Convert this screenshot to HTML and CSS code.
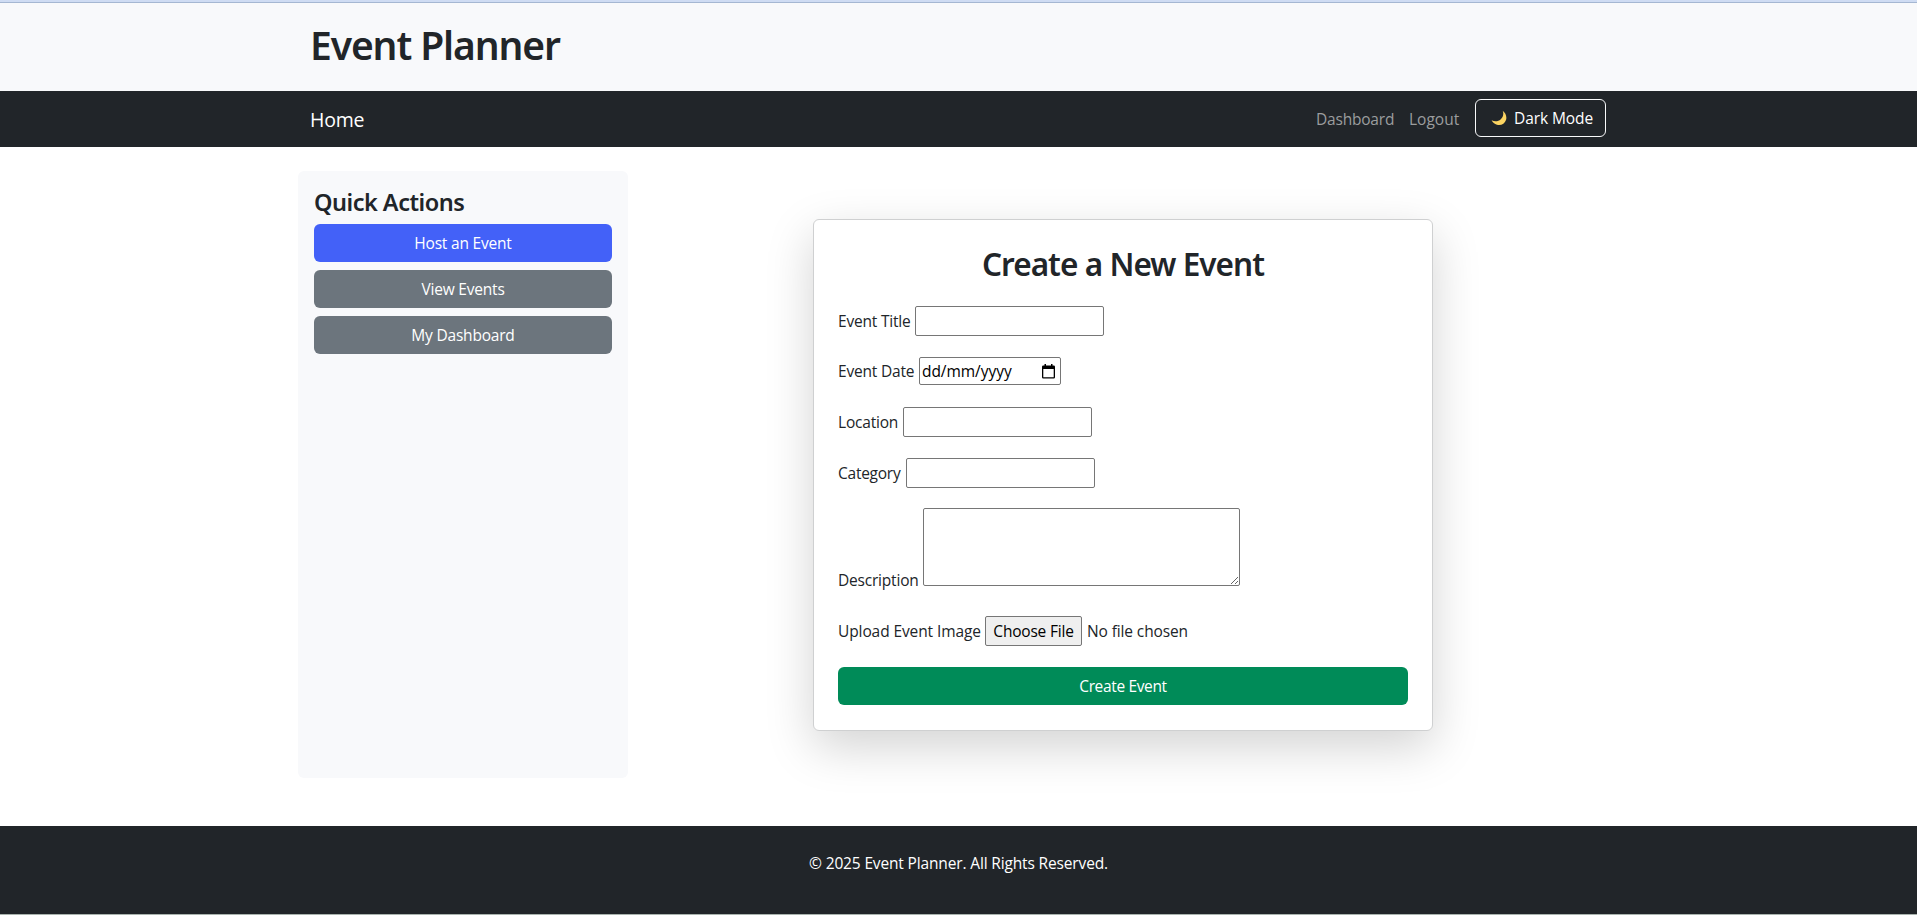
FILE: index.html
```
<!DOCTYPE html>
<html lang="en">
<head>
<meta charset="utf-8">
<title>Event Planner</title>
<link rel="stylesheet" href="styles.css">
</head>
<body>
<header class="header">
  <div class="container"><h1 class="brand-title">Event Planner</h1></div>
</header>
<nav class="navbar">
  <div class="container navbar-inner">
    <a class="navbar-brand">Home</a>
    <div class="navbar-links">
      <a class="nav-link">Dashboard</a>
      <a class="nav-link nav-logout">Logout</a>
      <button class="theme-toggle" type="button">
        <svg class="moon" viewBox="0 0 16 16" width="16" height="16"><path d="M11.7 .8C14.6 3 16.1 6.600 15 10.100C13.800 14 9.900 15.800 6 14.800C3.500 14.200 1.600 12.500 .6 10.300C3.700 11.900 7.300 11.600 9.800 9.300C12.200 7.100 12.900 3.800 11.700 .8Z" fill="#fcd462"/></svg>
        <span>Dark Mode</span>
      </button>
    </div>
  </div>
</nav>
<main class="layout">
  <aside class="sidebar">
    <h4 class="sidebar-title">Quick Actions</h4>
    <a class="btn btn-primary">Host an Event</a>
    <a class="btn btn-secondary">View Events</a>
    <a class="btn btn-secondary">My Dashboard</a>
  </aside>
  <section class="content">
    <form class="card">
      <h2 class="card-title">Create a New Event</h2>
      <div class="field"><label class="label-title" for="title">Event Title</label><input class="text-input" id="title" type="text"></div>
      <div class="field field-date"><label class="label-date">Event Date</label>
        <div class="date-input"><span class="date-text">dd/mm/yyyy</span>
          <svg width="13" height="15" viewBox="0 0 13 15"><path d="M2.500 0h1.500v1.500h5V0h1.500v1.500h1.200Q13 1.500 13 2.800v10.400Q13 14.500 11.700 14.500H1.300Q0 14.500 0 13.200V2.800Q0 1.500 1.300 1.500h1.200zM1.300 5v8.200h10.400V5z" fill="#000" fill-rule="evenodd"/></svg>
        </div>
      </div>
      <div class="field"><label class="label-location" for="location">Location</label><input class="text-input" id="location" type="text"></div>
      <div class="field"><label class="label-category" for="category">Category</label><input class="text-input" id="category" type="text"></div>
      <div class="field field-area"><label class="label-description" for="description">Description</label><textarea class="text-area" id="description"></textarea></div>
      <div class="field field-file"><label class="label-image">Upload Event Image</label><button class="file-button" type="button">Choose File</button><span class="file-name">No file chosen</span></div>
      <button class="btn btn-success" type="button">Create Event</button>
    </form>
  </section>
</main>
<footer class="footer"><p class="copyright">© 2025 Event Planner. All Rights Reserved.</p></footer>
</body>
</html>
```
FILE: styles.css
```
* { box-sizing: border-box; }

body {
  margin: 0;
  height: 915px;
  overflow: hidden;
  display: flex;
  flex-direction: column;
  background: #fff;
  color: #212529;
  font: 15.5px/24px "Open Sans", "Noto Sans", sans-serif;
  letter-spacing: -0.2px;
  border-bottom: 1px solid #a9b3ae;
}

h1, h2, h4, p { margin: 0; }

h1, h2, h4 {
  font-family: "Noto Sans", "Open Sans", sans-serif;
  font-weight: 600;
}

button, input, textarea {
  font: inherit;
  letter-spacing: inherit;
}

.container {
  width: 1321px;
  margin: 0 auto;
  padding: 0 13px 0 12px;
}

.header {
  height: 91px;
  padding-top: 16px;
  background: #f8f9fb;
  border-top: 2px solid #cfdcf3;
  box-shadow: inset 0 1px #a5b7d2;
}

.brand-title {
  font-size: 39px;
  line-height: 54px;
  letter-spacing: -1.1px;
}

.navbar {
  height: 56px;
  background: #212529;
}

.navbar-inner,
.navbar-links {
  height: 56px;
  display: flex;
  align-items: center;
}

.navbar-inner { justify-content: space-between; }

.navbar-brand {
  color: #fff;
  font-size: 19.5px;
  padding-top: 1px;
}

.nav-link {
  width: 77px;
  margin-right: 16px;
  color: #9b9d9e;
}

.nav-logout {
  width: 51px;
  letter-spacing: 0;
  margin-right: 15px;
}

.theme-toggle {
  width: 131px;
  height: 38px;
  margin-bottom: 2px;
  padding: 0 0 0 15px;
  display: flex;
  align-items: center;
  gap: 7px;
  background: transparent;
  color: #fff;
  border: 1px solid #f8f9fa;
  border-radius: 6px;
  letter-spacing: -0.08px;
}

.layout {
  width: 1321px;
  height: 679px;
  margin: 0 auto;
  padding: 24px 1px 48px 0;
  display: flex;
}

.sidebar {
  width: 330px;
  padding: 16px;
  display: flex;
  flex-direction: column;
  gap: 8px;
  background: #f8f9fb;
  border-radius: 6px;
}

.sidebar-title {
  height: 29px;
  padding-top: 1px;
  font-size: 23.5px;
  line-height: 29px;
  letter-spacing: -0.5px;
}

.btn {
  height: 38px;
  display: flex;
  align-items: center;
  justify-content: center;
  flex: none;
  color: #fff;
  border: 0;
  border-radius: 6px;
}

.btn-primary { background: #4361f8; }
.btn-secondary { background: #6c757d; }

.btn-success {
  width: 100%;
  background: #008b58;
  letter-spacing: -0.35px;
}

.content {
  flex: 1;
  padding: 48px 0;
  display: flex;
  justify-content: center;
  align-items: flex-start;
}

.card {
  width: 620px;
  height: 512px;
  padding: 24px;
  background: #fff;
  border: 1px solid #cfd0d1;
  border-radius: 6px;
  box-shadow: 0 16px 48px rgba(0, 0, 0, 0.175);
}

.card-title {
  margin-bottom: 23px;
  text-align: center;
  font-size: 31.5px;
  line-height: 39px;
  letter-spacing: -0.95px;
}

.field {
  height: 30px;
  margin-bottom: 20.6px;
  display: flex;
  align-items: center;
}

.field-date { padding-bottom: 1px; }

.label-title { width: 77px; }
.label-date { width: 81px; }
.label-location { width: 65px; }
.label-category { width: 68px; letter-spacing: -0.25px; }
.label-description { width: 85px; }
.label-image { width: 147px; letter-spacing: -0.1px; }

.text-input,
.date-input,
.text-area,
.file-button {
  border: 1px solid #767676;
  border-radius: 2px;
  outline: 0;
}

.text-input {
  width: 189px;
  height: 30px;
  padding: 1px 2px;
  background: #fff;
}

.date-input {
  width: 142px;
  height: 28px;
  padding: 0 5px 0 2px;
  display: flex;
  align-items: center;
  justify-content: space-between;
  color: #000;
}

.date-text { letter-spacing: -0.05px; }

.field-area {
  height: 78px;
  margin-bottom: 30px;
  align-items: flex-end;
}

.label-description { margin-bottom: -6px; }

.text-area {
  width: 317px;
  height: 78px;
  background: #fff;
  resize: both;
}

.file-button {
  width: 97px;
  height: 30px;
  margin-right: 5px;
  padding: 0;
  background: #efefef;
  color: #000;
}

.file-name { letter-spacing: -0.12px; }

.footer {
  height: 88px;
  padding-top: 25px;
  background: #212529;
  color: #fff;
  text-align: center;
}

.copyright { letter-spacing: -0.15px; }
```
